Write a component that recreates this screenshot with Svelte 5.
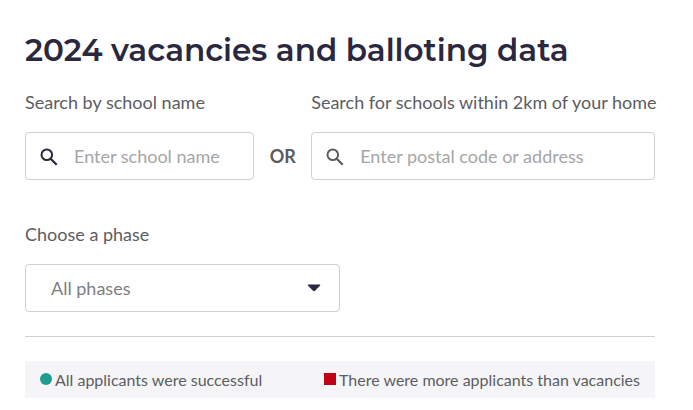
<script lang="ts">
    const phases = ['All phases', 'Phase 1', 'Phase 2A', 'Phase 2B', 'Phase 2C', 'Phase 2C Supplementary', 'Phase 3'];

    let schoolName = $state('');
    let address = $state('');
    let phase = $state('All phases');
</script>

{#snippet searchIcon()}
    <svg class="search-icon" viewBox="0 0 18 18" width="18" height="18" fill="none" stroke="currentColor" aria-hidden="true">
        <circle cx="6.8" cy="6.8" r="5.3" stroke-width="2" />
        <path d="M10.7 10.7 16.7 16.7" stroke-width="2.3" />
    </svg>
{/snippet}

<main>
    <h1>2024 vacancies and balloting data</h1>

    <form class="search" onsubmit={(e) => e.preventDefault()}>
        <div class="field school">
            <label for="school-name">Search by school name</label>
            <div class="control dark">
                {@render searchIcon()}
                <input id="school-name" type="text" placeholder="Enter school name" bind:value={schoolName} />
            </div>
        </div>

        <span class="or">OR</span>

        <div class="field home">
            <label for="address">Search for schools within 2km of your home</label>
            <div class="control">
                {@render searchIcon()}
                <input id="address" type="text" placeholder="Enter postal code or address" bind:value={address} />
            </div>
        </div>
    </form>

    <div class="field phase">
        <label for="phase">Choose a phase</label>
        <div class="select-wrap">
            <select id="phase" bind:value={phase}>
                {#each phases as option}
                    <option value={option}>{option}</option>
                {/each}
            </select>
            <svg class="caret" viewBox="0 0 14 8" width="14" height="8" aria-hidden="true">
                <path d="M1.4.5h11.2q1.2 0 .5 1L8 6.8q-1 .9-2 0L.9 1.5q-.7-1 .5-1Z" fill="currentColor" />
            </svg>
        </div>
    </div>

    <hr />

    <ul class="legend">
        <li><span class="marker success"></span>All applicants were successful</li>
        <li><span class="marker ballot"></span>There were more applicants than vacancies</li>
    </ul>
</main>

<style>
    :global(body) {
        background: #fff;
    }

    main {
        padding: 30px 38px 12px 25px;
        color: #5c5d61;
        font-family: Lato, "Noto Sans", sans-serif;
        font-size: 18px;
        line-height: 24px;
    }

    h1 {
        margin: 0 0 20px;
        color: #2a283e;
        font-family: Montserrat, Inter, sans-serif;
        font-size: 31px;
        font-weight: 600;
        line-height: 40px;
    }

    .search {
        display: flex;
        align-items: flex-end;
        margin-bottom: 42px;
    }

    .field {
        display: flex;
        flex-direction: column;
        gap: 18px;
        min-width: 0;
    }

    label {
        white-space: nowrap;
    }

    .school {
        flex: 2 1 0;
    }

    .home {
        flex: 3 1 0;
    }

    .or {
        width: 57px;
        line-height: 48px;
        font-weight: 700;
        text-align: center;
    }

    .control {
        display: flex;
        align-items: center;
        gap: 16px;
        box-sizing: border-box;
        height: 48px;
        padding: 0 14px;
        border: 1px solid #d0d0d3;
        border-radius: 4px;
    }

    .search-icon {
        flex: none;
        margin-top: 2px;
    }

    .dark .search-icon {
        color: #2a283e;
    }

    input {
        flex: 1;
        min-width: 0;
        padding: 0;
        border: 0;
        outline: 0;
        background: none;
        color: inherit;
        font: inherit;
    }

    input::placeholder {
        color: #a6a6a8;
        opacity: 1;
    }

    .control:focus-within,
    select:focus-visible {
        border-color: #2a283e;
    }

    .phase {
        width: 50%;
    }

    .select-wrap {
        position: relative;
    }

    select {
        display: block;
        width: 100%;
        height: 48px;
        padding: 0 48px 0 25px;
        border: 1px solid #d0d0d3;
        border-radius: 4px;
        outline: 0;
        appearance: none;
        background: #fff;
        color: #808083;
        font: inherit;
    }

    .caret {
        position: absolute;
        top: 20px;
        right: 19px;
        color: #2a283e;
        pointer-events: none;
    }

    hr {
        margin: 24px 0;
        border: 0;
        border-top: 1px solid #d0d0d3;
    }

    .legend {
        display: flex;
        flex-wrap: wrap;
        justify-content: space-between;
        margin: 0;
        padding: 7px 15px 6px;
        background: #f5f5f7;
        font-size: 16px;
        list-style: none;
    }

    .legend li {
        display: flex;
        align-items: center;
        gap: 3px;
    }

    .marker {
        width: 12px;
        height: 12px;
        margin-bottom: 2px;
    }

    .success {
        border-radius: 50%;
        background: #1f9c92;
    }

    .ballot {
        background: #c00014;
    }
</style>
